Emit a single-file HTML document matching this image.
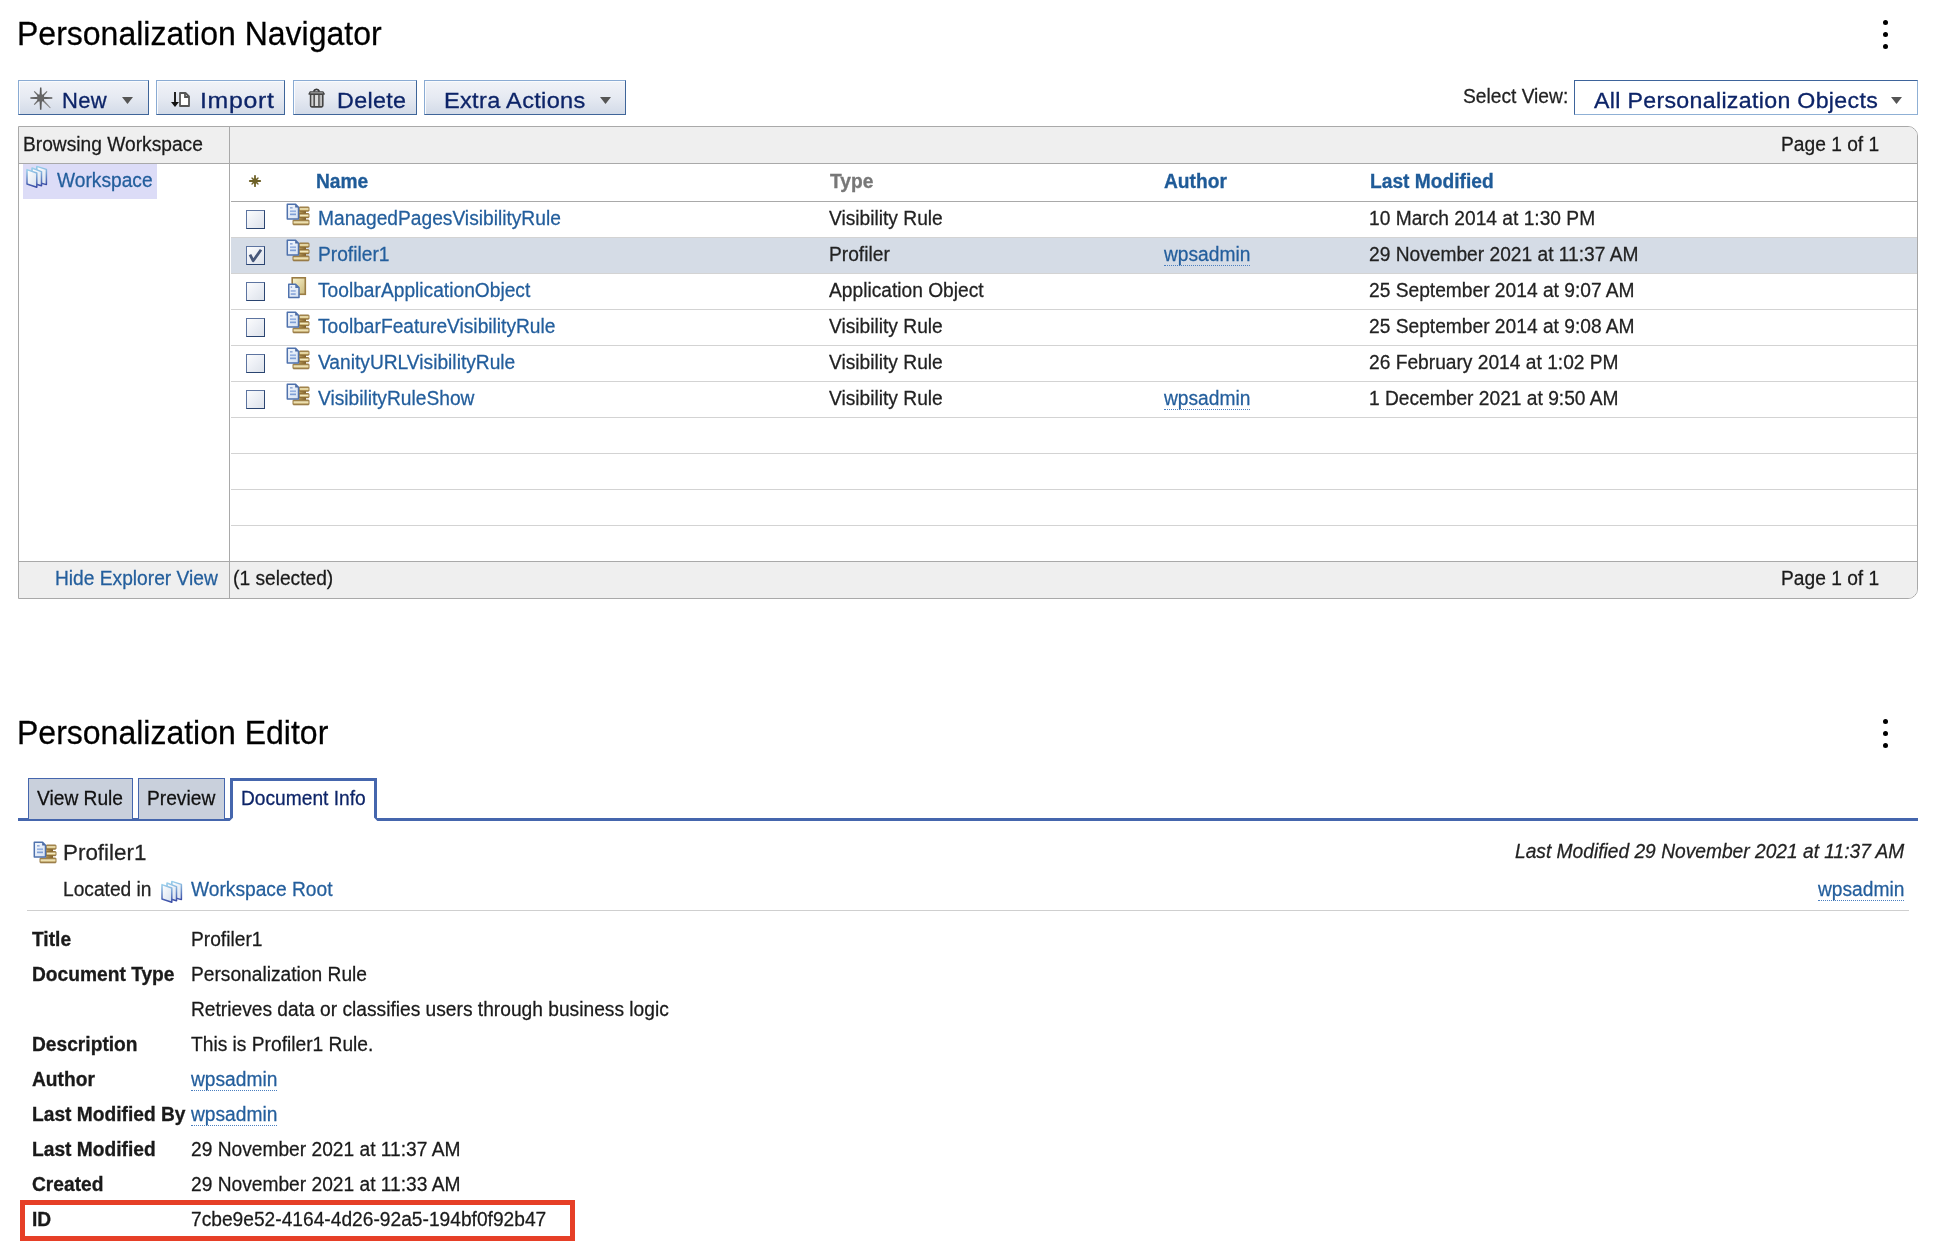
<!DOCTYPE html>
<html><head><meta charset="utf-8"><title>Personalization</title>
<style>
html,body{margin:0;padding:0;background:#fff;width:1940px;height:1260px;overflow:hidden;position:relative}
body{font-family:"Liberation Sans", sans-serif}
.t{position:absolute;white-space:nowrap;font-family:"Liberation Sans", sans-serif;will-change:transform}
.b{position:absolute;box-sizing:border-box}
.lnk{border-bottom:1.5px dotted #4a7fc0}
</style></head><body>
<div class="t" style="left:17px;top:18px;font-size:32px;line-height:32px;color:#000;font-weight:normal;font-style:normal;transform:scale(1,1.02);transform-origin:0 27px;-webkit-text-stroke:0.25px #000;">Personalization Navigator</div>
<div class="b" style="left:1882.5px;top:19.5px;width:5px;height:5px;border-radius:50%;background:#000"></div>
<div class="b" style="left:1882.5px;top:31.5px;width:5px;height:5px;border-radius:50%;background:#000"></div>
<div class="b" style="left:1882.5px;top:43.5px;width:5px;height:5px;border-radius:50%;background:#000"></div>
<div class="b" style="left:18px;top:80px;width:131px;height:35px;border:1px solid;border-color:#8aabd3 #3f6599 #3f6599 #8aabd3;box-shadow:inset 1px 1px 0 #fafbfd;background:linear-gradient(#f1f3f8,#e6eaf2 50%,#d3dbe8);"></div>
<svg class="b" style="left:24px;top:84px" width="34" height="30" viewBox="0 0 34 30"><polygon points="17.48,13.23 10.56,7.05 9.84,7.75 15.92,14.77" fill="#707070"/><polygon points="17.49,14.77 23.46,7.75 22.74,7.05 15.91,13.23" fill="#707070"/><polygon points="15.91,13.23 9.84,20.35 10.56,21.05 17.49,14.77" fill="#707070"/><polygon points="15.91,14.77 26.08,24.31 26.72,23.69 17.49,13.23" fill="#858585"/><polygon points="18.00,14.00 17.40,3.60 16.00,3.60 15.40,14.00" fill="#5a5a5a"/><polygon points="15.40,14.00 16.00,25.70 17.40,25.70 18.00,14.00" fill="#5a5a5a"/><polygon points="16.70,12.80 6.40,13.20 6.40,14.80 16.70,15.20" fill="#606060"/><polygon points="16.70,15.20 28.30,14.80 28.30,13.20 16.70,12.80" fill="#606060"/><rect x="13.399999999999999" y="10.7" width="6.6" height="6.6" fill="#5f5f5f"/><rect x="13.7" y="11" width="6" height="6" fill="#666" transform="rotate(45 16.7 14)"/></svg>
<div class="t" style="left:61.5px;top:90px;font-size:22px;line-height:22px;color:#0d2468;font-weight:normal;font-style:normal;transform:scale(1,1.03);transform-origin:0 18px;-webkit-text-stroke:0.25px #0d2468;letter-spacing:0.3px;-webkit-text-stroke:0.3px #0d2468">New</div>
<svg class="b" style="left:122.0px;top:97px" width="11" height="7" viewBox="0 0 11 7"><polygon points="0,0 11,0 5.5,7" fill="#555"/></svg>
<div class="b" style="left:156px;top:80px;width:129px;height:35px;border:1px solid;border-color:#8aabd3 #3f6599 #3f6599 #8aabd3;box-shadow:inset 1px 1px 0 #fafbfd;background:linear-gradient(#f1f3f8,#e6eaf2 50%,#d3dbe8);"></div>
<svg class="b" style="left:166px;top:84px" width="30" height="30" viewBox="0 0 30 30"><path d="M9 8 V21" stroke="#222" stroke-width="2"/><polygon points="5,18 13,18 9,23" fill="#111"/><path d="M14 9 H19.5 L23 12.5 V22 H14 Z" fill="#fff" stroke="#555" stroke-width="1.8" stroke-linejoin="round"/><path d="M19 9 V13 H23" fill="none" stroke="#555" stroke-width="1.8"/></svg>
<div class="t" style="left:200px;top:90px;font-size:22px;line-height:22px;color:#0d2468;font-weight:normal;font-style:normal;transform:scale(1.13,1.03);transform-origin:0 18px;-webkit-text-stroke:0.25px #0d2468;letter-spacing:0.6px;-webkit-text-stroke:0.3px #0d2468">Import</div>
<div class="b" style="left:293px;top:80px;width:124px;height:35px;border:1px solid;border-color:#8aabd3 #3f6599 #3f6599 #8aabd3;box-shadow:inset 1px 1px 0 #fafbfd;background:linear-gradient(#f1f3f8,#e6eaf2 50%,#d3dbe8);"></div>
<svg class="b" style="left:302px;top:84px" width="30" height="30" viewBox="0 0 30 30"><path d="M8.6 10.3 H20.8 V21.6 Q20.8 22.9 19.6 22.9 H9.8 Q8.6 22.9 8.6 21.6 Z" fill="#c4c4c4" stroke="#454545" stroke-width="1.6"/><rect x="13.2" y="11.2" width="2.9" height="10.8" fill="#dedede"/><rect x="9.7" y="11.2" width="1.4" height="10.8" fill="#d0d0d0"/><rect x="17.8" y="11.2" width="1.4" height="10.8" fill="#b8b8b8"/><rect x="11.4" y="11" width="1.6" height="11" fill="#555"/><rect x="16.2" y="11" width="1.5" height="11" fill="#555"/><path d="M7 10 L8.2 7.9 H20.9 L22.3 10 Z" fill="#d4d4d4" stroke="#454545" stroke-width="1.3" stroke-linejoin="round"/><path d="M11.6 7.6 Q12.4 5.2 14.6 5.3 Q16.6 5.4 17.4 7.6" fill="none" stroke="#3a3a3a" stroke-width="1.7"/></svg>
<div class="t" style="left:336.5px;top:90px;font-size:22px;line-height:22px;color:#0d2468;font-weight:normal;font-style:normal;transform:scale(1.06,1.03);transform-origin:0 18px;-webkit-text-stroke:0.25px #0d2468;letter-spacing:0.3px;-webkit-text-stroke:0.3px #0d2468">Delete</div>
<div class="b" style="left:424px;top:80px;width:202px;height:35px;border:1px solid;border-color:#8aabd3 #3f6599 #3f6599 #8aabd3;box-shadow:inset 1px 1px 0 #fafbfd;background:linear-gradient(#f1f3f8,#e6eaf2 50%,#d3dbe8);"></div>
<div class="t" style="left:443.5px;top:90px;font-size:22px;line-height:22px;color:#0d2468;font-weight:normal;font-style:normal;transform:scale(1.07,1.03);transform-origin:0 18px;-webkit-text-stroke:0.25px #0d2468;letter-spacing:0.3px;-webkit-text-stroke:0.3px #0d2468">Extra Actions</div>
<svg class="b" style="left:599.5px;top:97px" width="11" height="7" viewBox="0 0 11 7"><polygon points="0,0 11,0 5.5,7" fill="#555"/></svg>
<div class="t" style="left:1463px;top:86.5px;font-size:19.2px;line-height:19.2px;color:#222;font-weight:normal;font-style:normal;transform:scale(1,1.02);transform-origin:0 16px;-webkit-text-stroke:0.25px #222;">Select View:</div>
<div class="b" style="left:1574px;top:80px;width:344px;height:35px;border:1px solid;border-color:#3e649b #8fb0d5 #8fb0d5 #3e649b;background:#fff;"></div>
<div class="t" style="left:1594px;top:90px;font-size:22px;line-height:22px;color:#0d2468;font-weight:normal;font-style:normal;transform:scale(1.053,1.03);transform-origin:0 18px;-webkit-text-stroke:0.25px #0d2468;letter-spacing:0.3px;-webkit-text-stroke:0.3px #0d2468">All Personalization Objects</div>
<svg class="b" style="left:1891.0px;top:97px" width="11" height="7" viewBox="0 0 11 7"><polygon points="0,0 11,0 5.5,7" fill="#555"/></svg>
<div class="b" style="left:18px;top:126px;width:1900px;height:473px;border:1px solid #a9a9a9;border-top-right-radius:10px;border-bottom-right-radius:10px;background:#fff;overflow:hidden"></div>
<div class="b" style="left:19px;top:127px;width:1898px;height:36px;background:#efefef;border-top-right-radius:9px"></div>
<div class="b" style="left:19px;top:163px;width:1898px;height:1px;background:#a9a9a9"></div>
<div class="b" style="left:19px;top:561px;width:1898px;height:1px;background:#a9a9a9"></div>
<div class="b" style="left:19px;top:562px;width:1898px;height:36px;background:#efefef;border-bottom-right-radius:9px"></div>
<div class="b" style="left:229px;top:127px;width:1px;height:471px;background:#a9a9a9"></div>
<div class="t" style="left:23px;top:135px;font-size:19.2px;line-height:19.2px;color:#1a1a1a;font-weight:normal;font-style:normal;transform:scale(1,1.02);transform-origin:0 16px;-webkit-text-stroke:0.25px #1a1a1a;">Browsing Workspace</div>
<div class="t" style="right:61px;top:135px;font-size:19.2px;line-height:19.2px;color:#1a1a1a;font-weight:normal;font-style:normal;text-align:right;transform:scale(1,1.02);transform-origin:100% 16px;-webkit-text-stroke:0.25px #1a1a1a;">Page 1 of 1</div>
<div class="b" style="left:23px;top:164px;width:134px;height:35px;background:#dcdcf7"></div>
<svg class="b" style="left:22px;top:162px" width="30" height="30" viewBox="0 0 30 30"><defs><linearGradient id="wsg" x1="0" y1="0" x2="0" y2="1"><stop offset="0" stop-color="#9ad0ec"/><stop offset="1" stop-color="#3a4ca6"/></linearGradient><linearGradient id="wsf" x1="0" y1="0" x2="1" y2="1"><stop offset="0" stop-color="#fff"/><stop offset="1" stop-color="#d6e0ee"/></linearGradient></defs><path d="M14.8 4.4 L24.4 7.4 V22.6 L14.8 20 Z" fill="url(#wsf)" stroke="url(#wsg)" stroke-width="1.5" stroke-linejoin="round"/><path d="M10 6 L19.5 9.6 V23.8 L10 21 Z" fill="url(#wsf)" stroke="url(#wsg)" stroke-width="1.5" stroke-linejoin="round"/><path d="M5 7.6 L14.8 11 V25.2 L5 22 Z" fill="url(#wsf)" stroke="url(#wsg)" stroke-width="1.5" stroke-linejoin="round"/></svg>
<div class="t" style="left:57px;top:171px;font-size:19.2px;line-height:19.2px;color:#235e9c;font-weight:normal;font-style:normal;transform:scale(1,1.02);transform-origin:0 16px;-webkit-text-stroke:0.25px #235e9c;">Workspace</div>
<div class="b" style="left:231px;top:201px;width:1686px;height:1px;background:#a9a9a9"></div>
<svg class="b" style="left:247.5px;top:173.5px" width="14" height="14" viewBox="0 0 14 14"><line x1="7" y1="7" x2="12.2" y2="7.0" stroke="#6e6128" stroke-width="1.8" stroke-linecap="round"/><line x1="7" y1="7" x2="10.0" y2="4.0" stroke="#6e6128" stroke-width="1.3" stroke-linecap="round"/><line x1="7" y1="7" x2="7.0" y2="1.8" stroke="#6e6128" stroke-width="1.8" stroke-linecap="round"/><line x1="7" y1="7" x2="4.0" y2="4.0" stroke="#6e6128" stroke-width="1.3" stroke-linecap="round"/><line x1="7" y1="7" x2="1.8" y2="7.0" stroke="#6e6128" stroke-width="1.8" stroke-linecap="round"/><line x1="7" y1="7" x2="4.0" y2="10.0" stroke="#6e6128" stroke-width="1.3" stroke-linecap="round"/><line x1="7" y1="7" x2="7.0" y2="12.2" stroke="#6e6128" stroke-width="1.8" stroke-linecap="round"/><line x1="7" y1="7" x2="10.0" y2="10.0" stroke="#6e6128" stroke-width="1.3" stroke-linecap="round"/><circle cx="7" cy="7" r="2.7" fill="#6e6128"/></svg>
<div class="t" style="left:315.5px;top:172px;font-size:19.2px;line-height:19.2px;color:#1f5b98;font-weight:bold;font-style:normal;transform:scale(1,1.02);transform-origin:0 16px;-webkit-text-stroke:0.3px #1f5b98;">Name</div>
<div class="t" style="left:829.5px;top:172px;font-size:19.2px;line-height:19.2px;color:#777;font-weight:bold;font-style:normal;transform:scale(1,1.02);transform-origin:0 16px;-webkit-text-stroke:0.3px #777;">Type</div>
<div class="t" style="left:1163.5px;top:172px;font-size:19.2px;line-height:19.2px;color:#1f5b98;font-weight:bold;font-style:normal;transform:scale(1,1.02);transform-origin:0 16px;-webkit-text-stroke:0.3px #1f5b98;">Author</div>
<div class="t" style="left:1370px;top:172px;font-size:19.2px;line-height:19.2px;color:#1f5b98;font-weight:bold;font-style:normal;transform:scale(1,1.02);transform-origin:0 16px;-webkit-text-stroke:0.3px #1f5b98;">Last Modified</div>
<div class="b" style="left:231px;top:237px;width:1686px;height:1px;background:#d3d3d3"></div>
<div class="b" style="left:246px;top:210px;width:19px;height:19px;border:1.5px solid #5d74a0;border-right:1.5px solid #2c4672;border-bottom:1.6px solid #2a4470;background:linear-gradient(135deg,#fbfcfd,#eceff5 50%,#dde2ea)"></div>
<svg class="b" style="left:284px;top:201px" width="26" height="26" viewBox="0 0 26 26"><defs><linearGradient id="gold" x1="0" y1="0" x2="0" y2="1"><stop offset="0" stop-color="#9a7a3a"/><stop offset="0.45" stop-color="#f4ebc4"/><stop offset="0.6" stop-color="#e6d49a"/><stop offset="1" stop-color="#8a6a30"/></linearGradient><linearGradient id="goldc" x1="0" y1="0" x2="1" y2="0"><stop offset="0" stop-color="#b89a58"/><stop offset="1" stop-color="#7e6030"/></linearGradient><linearGradient id="docf" x1="0" y1="0" x2="1" y2="1"><stop offset="0" stop-color="#f4f8fd"/><stop offset="1" stop-color="#d6e2f3"/></linearGradient><linearGradient id="goldsq" x1="0" y1="0" x2="1" y2="1"><stop offset="0" stop-color="#fbf6d0"/><stop offset="1" stop-color="#c9b77a"/></linearGradient></defs><rect x="15" y="8" width="7" height="13" fill="url(#goldc)"/><rect x="15.2" y="6" width="9.8" height="4.2" rx="0.7" fill="url(#gold)" stroke="#8e6e34" stroke-width="0.9"/><rect x="15.2" y="12.6" width="9.8" height="4.1" rx="0.7" fill="url(#gold)" stroke="#8e6e34" stroke-width="0.9"/><rect x="9" y="19" width="16" height="4.8" rx="0.7" fill="url(#gold)" stroke="#8e6e34" stroke-width="0.9"/><path d="M3.3 3.3 H11.6 L14.5 6.2 V18.1 H3.3 Z" fill="url(#docf)" stroke="#4f72ad" stroke-width="1.5" stroke-linejoin="round"/><path d="M11.2 3.4 V6.6 H14.4 Z" fill="#4a68a0"/><rect x="6" y="6.2" width="2.6" height="1.3" fill="#7d9ad0"/><rect x="6" y="9.4" width="6" height="1.7" fill="#94b0e0"/><rect x="6" y="12.5" width="6" height="1.7" fill="#7f9fd6"/></svg>
<div class="t" style="left:317.5px;top:209px;font-size:19.2px;line-height:19.2px;color:#235e9c;font-weight:normal;font-style:normal;transform:scale(1,1.02);transform-origin:0 16px;-webkit-text-stroke:0.25px #235e9c;">ManagedPagesVisibilityRule</div>
<div class="t" style="left:829px;top:209px;font-size:19.2px;line-height:19.2px;color:#222;font-weight:normal;font-style:normal;transform:scale(1,1.02);transform-origin:0 16px;-webkit-text-stroke:0.25px #222;">Visibility Rule</div>
<div class="t" style="left:1369px;top:209px;font-size:19.2px;line-height:19.2px;color:#222;font-weight:normal;font-style:normal;transform:scale(1,1.02);transform-origin:0 16px;-webkit-text-stroke:0.25px #222;">10 March 2014 at 1:30 PM</div>
<div class="b" style="left:231px;top:238px;width:1686px;height:36px;background:#d5dce6"></div>
<div class="b" style="left:231px;top:273px;width:1686px;height:1px;background:#d3d3d3"></div>
<div class="b" style="left:246px;top:246px;width:19px;height:19px;border:1.5px solid #5d74a0;border-right:1.5px solid #2c4672;border-bottom:1.6px solid #2a4470;background:linear-gradient(135deg,#fbfcfd,#eceff5 50%,#dde2ea)"></div>
<svg class="b" style="left:246px;top:246px" width="19" height="19" viewBox="0 0 19 19"><path d="M4 8.6 L7.2 14.8 L15 3.8" fill="none" stroke="#47587a" stroke-width="2.8" stroke-linejoin="round"/></svg>
<svg class="b" style="left:284px;top:237px" width="26" height="26" viewBox="0 0 26 26"><defs><linearGradient id="gold" x1="0" y1="0" x2="0" y2="1"><stop offset="0" stop-color="#9a7a3a"/><stop offset="0.45" stop-color="#f4ebc4"/><stop offset="0.6" stop-color="#e6d49a"/><stop offset="1" stop-color="#8a6a30"/></linearGradient><linearGradient id="goldc" x1="0" y1="0" x2="1" y2="0"><stop offset="0" stop-color="#b89a58"/><stop offset="1" stop-color="#7e6030"/></linearGradient><linearGradient id="docf" x1="0" y1="0" x2="1" y2="1"><stop offset="0" stop-color="#f4f8fd"/><stop offset="1" stop-color="#d6e2f3"/></linearGradient><linearGradient id="goldsq" x1="0" y1="0" x2="1" y2="1"><stop offset="0" stop-color="#fbf6d0"/><stop offset="1" stop-color="#c9b77a"/></linearGradient></defs><rect x="15" y="8" width="7" height="13" fill="url(#goldc)"/><rect x="15.2" y="6" width="9.8" height="4.2" rx="0.7" fill="url(#gold)" stroke="#8e6e34" stroke-width="0.9"/><rect x="15.2" y="12.6" width="9.8" height="4.1" rx="0.7" fill="url(#gold)" stroke="#8e6e34" stroke-width="0.9"/><rect x="9" y="19" width="16" height="4.8" rx="0.7" fill="url(#gold)" stroke="#8e6e34" stroke-width="0.9"/><path d="M3.3 3.3 H11.6 L14.5 6.2 V18.1 H3.3 Z" fill="url(#docf)" stroke="#4f72ad" stroke-width="1.5" stroke-linejoin="round"/><path d="M11.2 3.4 V6.6 H14.4 Z" fill="#4a68a0"/><rect x="6" y="6.2" width="2.6" height="1.3" fill="#7d9ad0"/><rect x="6" y="9.4" width="6" height="1.7" fill="#94b0e0"/><rect x="6" y="12.5" width="6" height="1.7" fill="#7f9fd6"/></svg>
<div class="t" style="left:317.5px;top:245px;font-size:19.2px;line-height:19.2px;color:#235e9c;font-weight:normal;font-style:normal;transform:scale(1,1.02);transform-origin:0 16px;-webkit-text-stroke:0.25px #235e9c;">Profiler1</div>
<div class="t" style="left:829px;top:245px;font-size:19.2px;line-height:19.2px;color:#222;font-weight:normal;font-style:normal;transform:scale(1,1.02);transform-origin:0 16px;-webkit-text-stroke:0.25px #222;">Profiler</div>
<div class="t" style="left:1164px;top:245px;font-size:19.2px;line-height:19.2px;color:#235e9c;font-weight:normal;font-style:normal;transform:scale(1,1.02);transform-origin:0 16px;-webkit-text-stroke:0.25px #235e9c;"><span class="lnk">wpsadmin</span></div>
<div class="t" style="left:1369px;top:245px;font-size:19.2px;line-height:19.2px;color:#222;font-weight:normal;font-style:normal;transform:scale(1,1.02);transform-origin:0 16px;-webkit-text-stroke:0.25px #222;">29 November 2021 at 11:37 AM</div>
<div class="b" style="left:231px;top:309px;width:1686px;height:1px;background:#d3d3d3"></div>
<div class="b" style="left:246px;top:282px;width:19px;height:19px;border:1.5px solid #5d74a0;border-right:1.5px solid #2c4672;border-bottom:1.6px solid #2a4470;background:linear-gradient(135deg,#fbfcfd,#eceff5 50%,#dde2ea)"></div>
<svg class="b" style="left:287px;top:276px" width="20" height="23" viewBox="0 0 20 23"><defs><linearGradient id="gold" x1="0" y1="0" x2="0" y2="1"><stop offset="0" stop-color="#9a7a3a"/><stop offset="0.45" stop-color="#f4ebc4"/><stop offset="0.6" stop-color="#e6d49a"/><stop offset="1" stop-color="#8a6a30"/></linearGradient><linearGradient id="goldc" x1="0" y1="0" x2="1" y2="0"><stop offset="0" stop-color="#b89a58"/><stop offset="1" stop-color="#7e6030"/></linearGradient><linearGradient id="docf" x1="0" y1="0" x2="1" y2="1"><stop offset="0" stop-color="#f4f8fd"/><stop offset="1" stop-color="#d6e2f3"/></linearGradient><linearGradient id="goldsq" x1="0" y1="0" x2="1" y2="1"><stop offset="0" stop-color="#fbf6d0"/><stop offset="1" stop-color="#c9b77a"/></linearGradient></defs><rect x="5.2" y="1.8" width="13.1" height="16.5" fill="url(#goldsq)" stroke="#9a7c44" stroke-width="1.6"/><path d="M1.75 8.25 H8.6 L12 11.65 V21.45 H1.75 Z" fill="url(#docf)" stroke="#4f72ad" stroke-width="1.5" stroke-linejoin="round"/><path d="M8.3 8.3 V12 H12 Z" fill="#5274ac"/><rect x="3.7" y="10.4" width="1.4" height="1.4" fill="#7d9ad0"/><rect x="3.7" y="14.2" width="5" height="1.5" fill="#8fabdc"/><rect x="3.7" y="17.3" width="5" height="1.5" fill="#7f9fd6"/></svg>
<div class="t" style="left:317.5px;top:281px;font-size:19.2px;line-height:19.2px;color:#235e9c;font-weight:normal;font-style:normal;transform:scale(1,1.02);transform-origin:0 16px;-webkit-text-stroke:0.25px #235e9c;">ToolbarApplicationObject</div>
<div class="t" style="left:829px;top:281px;font-size:19.2px;line-height:19.2px;color:#222;font-weight:normal;font-style:normal;transform:scale(1,1.02);transform-origin:0 16px;-webkit-text-stroke:0.25px #222;">Application Object</div>
<div class="t" style="left:1369px;top:281px;font-size:19.2px;line-height:19.2px;color:#222;font-weight:normal;font-style:normal;transform:scale(1,1.02);transform-origin:0 16px;-webkit-text-stroke:0.25px #222;">25 September 2014 at 9:07 AM</div>
<div class="b" style="left:231px;top:345px;width:1686px;height:1px;background:#d3d3d3"></div>
<div class="b" style="left:246px;top:318px;width:19px;height:19px;border:1.5px solid #5d74a0;border-right:1.5px solid #2c4672;border-bottom:1.6px solid #2a4470;background:linear-gradient(135deg,#fbfcfd,#eceff5 50%,#dde2ea)"></div>
<svg class="b" style="left:284px;top:309px" width="26" height="26" viewBox="0 0 26 26"><defs><linearGradient id="gold" x1="0" y1="0" x2="0" y2="1"><stop offset="0" stop-color="#9a7a3a"/><stop offset="0.45" stop-color="#f4ebc4"/><stop offset="0.6" stop-color="#e6d49a"/><stop offset="1" stop-color="#8a6a30"/></linearGradient><linearGradient id="goldc" x1="0" y1="0" x2="1" y2="0"><stop offset="0" stop-color="#b89a58"/><stop offset="1" stop-color="#7e6030"/></linearGradient><linearGradient id="docf" x1="0" y1="0" x2="1" y2="1"><stop offset="0" stop-color="#f4f8fd"/><stop offset="1" stop-color="#d6e2f3"/></linearGradient><linearGradient id="goldsq" x1="0" y1="0" x2="1" y2="1"><stop offset="0" stop-color="#fbf6d0"/><stop offset="1" stop-color="#c9b77a"/></linearGradient></defs><rect x="15" y="8" width="7" height="13" fill="url(#goldc)"/><rect x="15.2" y="6" width="9.8" height="4.2" rx="0.7" fill="url(#gold)" stroke="#8e6e34" stroke-width="0.9"/><rect x="15.2" y="12.6" width="9.8" height="4.1" rx="0.7" fill="url(#gold)" stroke="#8e6e34" stroke-width="0.9"/><rect x="9" y="19" width="16" height="4.8" rx="0.7" fill="url(#gold)" stroke="#8e6e34" stroke-width="0.9"/><path d="M3.3 3.3 H11.6 L14.5 6.2 V18.1 H3.3 Z" fill="url(#docf)" stroke="#4f72ad" stroke-width="1.5" stroke-linejoin="round"/><path d="M11.2 3.4 V6.6 H14.4 Z" fill="#4a68a0"/><rect x="6" y="6.2" width="2.6" height="1.3" fill="#7d9ad0"/><rect x="6" y="9.4" width="6" height="1.7" fill="#94b0e0"/><rect x="6" y="12.5" width="6" height="1.7" fill="#7f9fd6"/></svg>
<div class="t" style="left:317.5px;top:317px;font-size:19.2px;line-height:19.2px;color:#235e9c;font-weight:normal;font-style:normal;transform:scale(1,1.02);transform-origin:0 16px;-webkit-text-stroke:0.25px #235e9c;">ToolbarFeatureVisibilityRule</div>
<div class="t" style="left:829px;top:317px;font-size:19.2px;line-height:19.2px;color:#222;font-weight:normal;font-style:normal;transform:scale(1,1.02);transform-origin:0 16px;-webkit-text-stroke:0.25px #222;">Visibility Rule</div>
<div class="t" style="left:1369px;top:317px;font-size:19.2px;line-height:19.2px;color:#222;font-weight:normal;font-style:normal;transform:scale(1,1.02);transform-origin:0 16px;-webkit-text-stroke:0.25px #222;">25 September 2014 at 9:08 AM</div>
<div class="b" style="left:231px;top:381px;width:1686px;height:1px;background:#d3d3d3"></div>
<div class="b" style="left:246px;top:354px;width:19px;height:19px;border:1.5px solid #5d74a0;border-right:1.5px solid #2c4672;border-bottom:1.6px solid #2a4470;background:linear-gradient(135deg,#fbfcfd,#eceff5 50%,#dde2ea)"></div>
<svg class="b" style="left:284px;top:345px" width="26" height="26" viewBox="0 0 26 26"><defs><linearGradient id="gold" x1="0" y1="0" x2="0" y2="1"><stop offset="0" stop-color="#9a7a3a"/><stop offset="0.45" stop-color="#f4ebc4"/><stop offset="0.6" stop-color="#e6d49a"/><stop offset="1" stop-color="#8a6a30"/></linearGradient><linearGradient id="goldc" x1="0" y1="0" x2="1" y2="0"><stop offset="0" stop-color="#b89a58"/><stop offset="1" stop-color="#7e6030"/></linearGradient><linearGradient id="docf" x1="0" y1="0" x2="1" y2="1"><stop offset="0" stop-color="#f4f8fd"/><stop offset="1" stop-color="#d6e2f3"/></linearGradient><linearGradient id="goldsq" x1="0" y1="0" x2="1" y2="1"><stop offset="0" stop-color="#fbf6d0"/><stop offset="1" stop-color="#c9b77a"/></linearGradient></defs><rect x="15" y="8" width="7" height="13" fill="url(#goldc)"/><rect x="15.2" y="6" width="9.8" height="4.2" rx="0.7" fill="url(#gold)" stroke="#8e6e34" stroke-width="0.9"/><rect x="15.2" y="12.6" width="9.8" height="4.1" rx="0.7" fill="url(#gold)" stroke="#8e6e34" stroke-width="0.9"/><rect x="9" y="19" width="16" height="4.8" rx="0.7" fill="url(#gold)" stroke="#8e6e34" stroke-width="0.9"/><path d="M3.3 3.3 H11.6 L14.5 6.2 V18.1 H3.3 Z" fill="url(#docf)" stroke="#4f72ad" stroke-width="1.5" stroke-linejoin="round"/><path d="M11.2 3.4 V6.6 H14.4 Z" fill="#4a68a0"/><rect x="6" y="6.2" width="2.6" height="1.3" fill="#7d9ad0"/><rect x="6" y="9.4" width="6" height="1.7" fill="#94b0e0"/><rect x="6" y="12.5" width="6" height="1.7" fill="#7f9fd6"/></svg>
<div class="t" style="left:317.5px;top:353px;font-size:19.2px;line-height:19.2px;color:#235e9c;font-weight:normal;font-style:normal;transform:scale(1,1.02);transform-origin:0 16px;-webkit-text-stroke:0.25px #235e9c;">VanityURLVisibilityRule</div>
<div class="t" style="left:829px;top:353px;font-size:19.2px;line-height:19.2px;color:#222;font-weight:normal;font-style:normal;transform:scale(1,1.02);transform-origin:0 16px;-webkit-text-stroke:0.25px #222;">Visibility Rule</div>
<div class="t" style="left:1369px;top:353px;font-size:19.2px;line-height:19.2px;color:#222;font-weight:normal;font-style:normal;transform:scale(1,1.02);transform-origin:0 16px;-webkit-text-stroke:0.25px #222;">26 February 2014 at 1:02 PM</div>
<div class="b" style="left:231px;top:417px;width:1686px;height:1px;background:#d3d3d3"></div>
<div class="b" style="left:246px;top:390px;width:19px;height:19px;border:1.5px solid #5d74a0;border-right:1.5px solid #2c4672;border-bottom:1.6px solid #2a4470;background:linear-gradient(135deg,#fbfcfd,#eceff5 50%,#dde2ea)"></div>
<svg class="b" style="left:284px;top:381px" width="26" height="26" viewBox="0 0 26 26"><defs><linearGradient id="gold" x1="0" y1="0" x2="0" y2="1"><stop offset="0" stop-color="#9a7a3a"/><stop offset="0.45" stop-color="#f4ebc4"/><stop offset="0.6" stop-color="#e6d49a"/><stop offset="1" stop-color="#8a6a30"/></linearGradient><linearGradient id="goldc" x1="0" y1="0" x2="1" y2="0"><stop offset="0" stop-color="#b89a58"/><stop offset="1" stop-color="#7e6030"/></linearGradient><linearGradient id="docf" x1="0" y1="0" x2="1" y2="1"><stop offset="0" stop-color="#f4f8fd"/><stop offset="1" stop-color="#d6e2f3"/></linearGradient><linearGradient id="goldsq" x1="0" y1="0" x2="1" y2="1"><stop offset="0" stop-color="#fbf6d0"/><stop offset="1" stop-color="#c9b77a"/></linearGradient></defs><rect x="15" y="8" width="7" height="13" fill="url(#goldc)"/><rect x="15.2" y="6" width="9.8" height="4.2" rx="0.7" fill="url(#gold)" stroke="#8e6e34" stroke-width="0.9"/><rect x="15.2" y="12.6" width="9.8" height="4.1" rx="0.7" fill="url(#gold)" stroke="#8e6e34" stroke-width="0.9"/><rect x="9" y="19" width="16" height="4.8" rx="0.7" fill="url(#gold)" stroke="#8e6e34" stroke-width="0.9"/><path d="M3.3 3.3 H11.6 L14.5 6.2 V18.1 H3.3 Z" fill="url(#docf)" stroke="#4f72ad" stroke-width="1.5" stroke-linejoin="round"/><path d="M11.2 3.4 V6.6 H14.4 Z" fill="#4a68a0"/><rect x="6" y="6.2" width="2.6" height="1.3" fill="#7d9ad0"/><rect x="6" y="9.4" width="6" height="1.7" fill="#94b0e0"/><rect x="6" y="12.5" width="6" height="1.7" fill="#7f9fd6"/></svg>
<div class="t" style="left:317.5px;top:389px;font-size:19.2px;line-height:19.2px;color:#235e9c;font-weight:normal;font-style:normal;transform:scale(1,1.02);transform-origin:0 16px;-webkit-text-stroke:0.25px #235e9c;">VisibilityRuleShow</div>
<div class="t" style="left:829px;top:389px;font-size:19.2px;line-height:19.2px;color:#222;font-weight:normal;font-style:normal;transform:scale(1,1.02);transform-origin:0 16px;-webkit-text-stroke:0.25px #222;">Visibility Rule</div>
<div class="t" style="left:1164px;top:389px;font-size:19.2px;line-height:19.2px;color:#235e9c;font-weight:normal;font-style:normal;transform:scale(1,1.02);transform-origin:0 16px;-webkit-text-stroke:0.25px #235e9c;"><span class="lnk">wpsadmin</span></div>
<div class="t" style="left:1369px;top:389px;font-size:19.2px;line-height:19.2px;color:#222;font-weight:normal;font-style:normal;transform:scale(1,1.02);transform-origin:0 16px;-webkit-text-stroke:0.25px #222;">1 December 2021 at 9:50 AM</div>
<div class="b" style="left:231px;top:453px;width:1686px;height:1px;background:#d3d3d3"></div>
<div class="b" style="left:231px;top:489px;width:1686px;height:1px;background:#d3d3d3"></div>
<div class="b" style="left:231px;top:525px;width:1686px;height:1px;background:#d3d3d3"></div>
<div class="t" style="right:1722px;top:569px;font-size:19.2px;line-height:19.2px;color:#235e9c;font-weight:normal;font-style:normal;text-align:right;transform:scale(1,1.02);transform-origin:100% 16px;-webkit-text-stroke:0.25px #235e9c;">Hide Explorer View</div>
<div class="t" style="left:232.5px;top:569px;font-size:19.2px;line-height:19.2px;color:#1a1a1a;font-weight:normal;font-style:normal;transform:scale(1,1.02);transform-origin:0 16px;-webkit-text-stroke:0.25px #1a1a1a;">(1 selected)</div>
<div class="t" style="right:61px;top:569px;font-size:19.2px;line-height:19.2px;color:#1a1a1a;font-weight:normal;font-style:normal;text-align:right;transform:scale(1,1.02);transform-origin:100% 16px;-webkit-text-stroke:0.25px #1a1a1a;">Page 1 of 1</div>
<div class="t" style="left:17px;top:717px;font-size:32px;line-height:32px;color:#000;font-weight:normal;font-style:normal;transform:scale(1,1.02);transform-origin:0 27px;-webkit-text-stroke:0.25px #000;">Personalization Editor</div>
<div class="b" style="left:1882.5px;top:718.5px;width:5px;height:5px;border-radius:50%;background:#000"></div>
<div class="b" style="left:1882.5px;top:730.5px;width:5px;height:5px;border-radius:50%;background:#000"></div>
<div class="b" style="left:1882.5px;top:742.5px;width:5px;height:5px;border-radius:50%;background:#000"></div>
<div class="b" style="left:18px;top:818px;width:1900px;height:3px;background:#4566ad"></div>
<div class="b" style="left:28px;top:778px;width:105px;height:41px;border:1px solid #4566ad;border-bottom:none;background:#c9d0dc"></div>
<div class="b" style="left:138px;top:778px;width:87px;height:41px;border:1px solid #4566ad;border-bottom:none;background:#c9d0dc"></div>
<div class="b" style="left:230px;top:778px;width:147px;height:43px;border:3px solid #4566ad;border-bottom:none;background:#fff"></div>
<svg class="b" style="left:226px;top:814px" width="155" height="9" viewBox="0 0 155 9"><polygon points="3.4,7.3 7.2,7.3 7.2,3.5" fill="#fff"/><polygon points="148,3.5 148,7.3 151.6,7.3" fill="#fff"/></svg>
<div class="t" style="left:37px;top:789px;font-size:19.2px;line-height:19.2px;color:#111;font-weight:normal;font-style:normal;transform:scale(1,1.02);transform-origin:0 16px;-webkit-text-stroke:0.25px #111;">View Rule</div>
<div class="t" style="left:147px;top:789px;font-size:19.2px;line-height:19.2px;color:#111;font-weight:normal;font-style:normal;transform:scale(1,1.02);transform-origin:0 16px;-webkit-text-stroke:0.25px #111;">Preview</div>
<div class="t" style="left:240.5px;top:789px;font-size:19.2px;line-height:19.2px;color:#0d2468;font-weight:normal;font-style:normal;transform:scale(1,1.02);transform-origin:0 16px;-webkit-text-stroke:0.25px #0d2468;">Document Info</div>
<svg class="b" style="left:31px;top:839px" width="26" height="26" viewBox="0 0 26 26"><defs><linearGradient id="gold" x1="0" y1="0" x2="0" y2="1"><stop offset="0" stop-color="#9a7a3a"/><stop offset="0.45" stop-color="#f4ebc4"/><stop offset="0.6" stop-color="#e6d49a"/><stop offset="1" stop-color="#8a6a30"/></linearGradient><linearGradient id="goldc" x1="0" y1="0" x2="1" y2="0"><stop offset="0" stop-color="#b89a58"/><stop offset="1" stop-color="#7e6030"/></linearGradient><linearGradient id="docf" x1="0" y1="0" x2="1" y2="1"><stop offset="0" stop-color="#f4f8fd"/><stop offset="1" stop-color="#d6e2f3"/></linearGradient><linearGradient id="goldsq" x1="0" y1="0" x2="1" y2="1"><stop offset="0" stop-color="#fbf6d0"/><stop offset="1" stop-color="#c9b77a"/></linearGradient></defs><rect x="15" y="8" width="7" height="13" fill="url(#goldc)"/><rect x="15.2" y="6" width="9.8" height="4.2" rx="0.7" fill="url(#gold)" stroke="#8e6e34" stroke-width="0.9"/><rect x="15.2" y="12.6" width="9.8" height="4.1" rx="0.7" fill="url(#gold)" stroke="#8e6e34" stroke-width="0.9"/><rect x="9" y="19" width="16" height="4.8" rx="0.7" fill="url(#gold)" stroke="#8e6e34" stroke-width="0.9"/><path d="M3.3 3.3 H11.6 L14.5 6.2 V18.1 H3.3 Z" fill="url(#docf)" stroke="#4f72ad" stroke-width="1.5" stroke-linejoin="round"/><path d="M11.2 3.4 V6.6 H14.4 Z" fill="#4a68a0"/><rect x="6" y="6.2" width="2.6" height="1.3" fill="#7d9ad0"/><rect x="6" y="9.4" width="6" height="1.7" fill="#94b0e0"/><rect x="6" y="12.5" width="6" height="1.7" fill="#7f9fd6"/></svg>
<div class="t" style="left:62.5px;top:842px;font-size:22.4px;line-height:22.4px;color:#222;font-weight:normal;font-style:normal;transform:scale(1,1.02);transform-origin:0 18px;-webkit-text-stroke:0.25px #222;">Profiler1</div>
<div class="t" style="right:36px;top:842px;font-size:19.2px;line-height:19.2px;color:#222;font-weight:normal;font-style:italic;text-align:right;transform:scale(1,1.02);transform-origin:100% 16px;-webkit-text-stroke:0.25px #222;">Last Modified 29 November 2021 at 11:37 AM</div>
<div class="t" style="left:62.5px;top:880px;font-size:19.2px;line-height:19.2px;color:#222;font-weight:normal;font-style:normal;transform:scale(1,1.02);transform-origin:0 16px;-webkit-text-stroke:0.25px #222;">Located in</div>
<svg class="b" style="left:157px;top:877px" width="30" height="30" viewBox="0 0 30 30"><defs><linearGradient id="wsg" x1="0" y1="0" x2="0" y2="1"><stop offset="0" stop-color="#9ad0ec"/><stop offset="1" stop-color="#3a4ca6"/></linearGradient><linearGradient id="wsf" x1="0" y1="0" x2="1" y2="1"><stop offset="0" stop-color="#fff"/><stop offset="1" stop-color="#d6e0ee"/></linearGradient></defs><path d="M14.8 4.4 L24.4 7.4 V22.6 L14.8 20 Z" fill="url(#wsf)" stroke="url(#wsg)" stroke-width="1.5" stroke-linejoin="round"/><path d="M10 6 L19.5 9.6 V23.8 L10 21 Z" fill="url(#wsf)" stroke="url(#wsg)" stroke-width="1.5" stroke-linejoin="round"/><path d="M5 7.6 L14.8 11 V25.2 L5 22 Z" fill="url(#wsf)" stroke="url(#wsg)" stroke-width="1.5" stroke-linejoin="round"/></svg>
<div class="t" style="left:190.5px;top:880px;font-size:19.2px;line-height:19.2px;color:#235e9c;font-weight:normal;font-style:normal;transform:scale(1,1.02);transform-origin:0 16px;-webkit-text-stroke:0.25px #235e9c;">Workspace Root</div>
<div class="t" style="right:36px;top:880px;font-size:19.2px;line-height:19.2px;color:#235e9c;font-weight:normal;font-style:normal;text-align:right;transform:scale(1,1.02);transform-origin:100% 16px;-webkit-text-stroke:0.25px #235e9c;"><span class="lnk">wpsadmin</span></div>
<div class="b" style="left:27px;top:910px;width:1882px;height:1px;background:#cfcfcf"></div>
<div class="t" style="left:31.5px;top:930px;font-size:19.2px;line-height:19.2px;color:#1a1a1a;font-weight:bold;font-style:normal;transform:scale(1,1.02);transform-origin:0 16px;-webkit-text-stroke:0.3px #1a1a1a;">Title</div>
<div class="t" style="left:191px;top:930px;font-size:19.2px;line-height:19.2px;color:#1a1a1a;font-weight:normal;font-style:normal;transform:scale(1,1.02);transform-origin:0 16px;-webkit-text-stroke:0.25px #1a1a1a;">Profiler1</div>
<div class="t" style="left:31.5px;top:965px;font-size:19.2px;line-height:19.2px;color:#1a1a1a;font-weight:bold;font-style:normal;transform:scale(1,1.02);transform-origin:0 16px;-webkit-text-stroke:0.3px #1a1a1a;">Document Type</div>
<div class="t" style="left:191px;top:965px;font-size:19.2px;line-height:19.2px;color:#1a1a1a;font-weight:normal;font-style:normal;transform:scale(1,1.02);transform-origin:0 16px;-webkit-text-stroke:0.25px #1a1a1a;">Personalization Rule</div>
<div class="t" style="left:191px;top:1000px;font-size:19.2px;line-height:19.2px;color:#1a1a1a;font-weight:normal;font-style:normal;transform:scale(1,1.02);transform-origin:0 16px;-webkit-text-stroke:0.25px #1a1a1a;">Retrieves data or classifies users through business logic</div>
<div class="t" style="left:31.5px;top:1035px;font-size:19.2px;line-height:19.2px;color:#1a1a1a;font-weight:bold;font-style:normal;transform:scale(1,1.02);transform-origin:0 16px;-webkit-text-stroke:0.3px #1a1a1a;">Description</div>
<div class="t" style="left:191px;top:1035px;font-size:19.2px;line-height:19.2px;color:#1a1a1a;font-weight:normal;font-style:normal;transform:scale(1,1.02);transform-origin:0 16px;-webkit-text-stroke:0.25px #1a1a1a;">This is Profiler1 Rule.</div>
<div class="t" style="left:31.5px;top:1070px;font-size:19.2px;line-height:19.2px;color:#1a1a1a;font-weight:bold;font-style:normal;transform:scale(1,1.02);transform-origin:0 16px;-webkit-text-stroke:0.3px #1a1a1a;">Author</div>
<div class="t" style="left:191px;top:1070px;font-size:19.2px;line-height:19.2px;color:#235e9c;font-weight:normal;font-style:normal;transform:scale(1,1.02);transform-origin:0 16px;-webkit-text-stroke:0.25px #235e9c;"><span class="lnk">wpsadmin</span></div>
<div class="t" style="left:31.5px;top:1105px;font-size:19.2px;line-height:19.2px;color:#1a1a1a;font-weight:bold;font-style:normal;transform:scale(1,1.02);transform-origin:0 16px;-webkit-text-stroke:0.3px #1a1a1a;">Last Modified By</div>
<div class="t" style="left:191px;top:1105px;font-size:19.2px;line-height:19.2px;color:#235e9c;font-weight:normal;font-style:normal;transform:scale(1,1.02);transform-origin:0 16px;-webkit-text-stroke:0.25px #235e9c;"><span class="lnk">wpsadmin</span></div>
<div class="t" style="left:31.5px;top:1140px;font-size:19.2px;line-height:19.2px;color:#1a1a1a;font-weight:bold;font-style:normal;transform:scale(1,1.02);transform-origin:0 16px;-webkit-text-stroke:0.3px #1a1a1a;">Last Modified</div>
<div class="t" style="left:191px;top:1140px;font-size:19.2px;line-height:19.2px;color:#1a1a1a;font-weight:normal;font-style:normal;transform:scale(1,1.02);transform-origin:0 16px;-webkit-text-stroke:0.25px #1a1a1a;">29 November 2021 at 11:37 AM</div>
<div class="t" style="left:31.5px;top:1175px;font-size:19.2px;line-height:19.2px;color:#1a1a1a;font-weight:bold;font-style:normal;transform:scale(1,1.02);transform-origin:0 16px;-webkit-text-stroke:0.3px #1a1a1a;">Created</div>
<div class="t" style="left:191px;top:1175px;font-size:19.2px;line-height:19.2px;color:#1a1a1a;font-weight:normal;font-style:normal;transform:scale(1,1.02);transform-origin:0 16px;-webkit-text-stroke:0.25px #1a1a1a;">29 November 2021 at 11:33 AM</div>
<div class="t" style="left:31.5px;top:1210px;font-size:19.2px;line-height:19.2px;color:#1a1a1a;font-weight:bold;font-style:normal;transform:scale(1,1.02);transform-origin:0 16px;-webkit-text-stroke:0.3px #1a1a1a;">ID</div>
<div class="t" style="left:191px;top:1210px;font-size:19.2px;line-height:19.2px;color:#1a1a1a;font-weight:normal;font-style:normal;transform:scale(1,1.02);transform-origin:0 16px;-webkit-text-stroke:0.25px #1a1a1a;">7cbe9e52-4164-4d26-92a5-194bf0f92b47</div>
<div class="b" style="left:20px;top:1200px;width:555px;height:41px;border:5px solid #e63f27"></div>
</body></html>
